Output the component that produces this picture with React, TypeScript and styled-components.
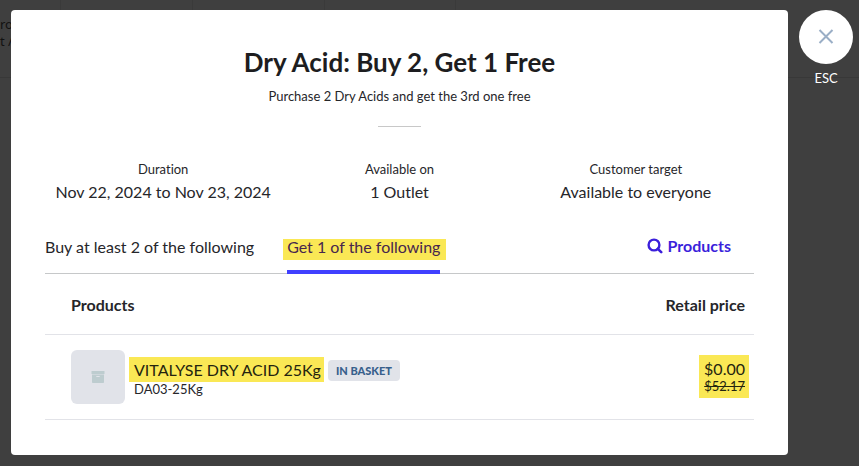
import React from "react";
import styled, { createGlobalStyle } from "styled-components";

const GlobalStyle = createGlobalStyle`
  *, *::before, *::after { box-sizing: border-box; }
  html, body { margin: 0; background: #3f3f3f; }
  body {
    font-family: Lato, "Open Sans", sans-serif;
    font-size: 16px;
    line-height: 24px;
    font-variant-ligatures: no-common-ligatures;
    color: #26262a;
  }
  h1, p, dl, dt, dd { margin: 0; }
  button { font: inherit; font-variant-ligatures: inherit; color: inherit; background: none; border: 0; padding: 0; cursor: pointer; }
`;

const Page = styled.div`
  position: relative;
  min-height: 100vh;
  overflow: hidden;
  background: #3f3f3f;
`;

const Backdrop = styled.div`
  position: absolute;
  inset: 0;
  overflow: hidden;
`;

const BackdropRow = styled.div`
  display: grid;
  grid-template-columns: 61px 132px 132px 131px 1fr;
  height: 78px;
  border-bottom: 1px solid #383838;
`;

const BackdropCell = styled.div`
  padding-top: 16px;
  border-right: 1px solid #3a3a3a;
  color: #111111;
  font-family: "Noto Sans", sans-serif;
  font-size: 13px;
  line-height: 17px;
  white-space: pre-line;

  &:last-child { border-right: 0; }
`;

const Overlay = styled.div`
  position: relative;
  display: flex;
  align-items: flex-start;
  gap: 11px;
  padding: 10px 6px 11px 11px;
`;

const Modal = styled.main`
  flex: 1;
  min-width: 0;
  padding: 36px 34px 35px;
  border-radius: 4px;
  background: #ffffff;
`;

const Header = styled.header`
  display: flex;
  flex-direction: column;
  align-items: center;
  text-align: center;
`;

const Title = styled.h1`
  font-size: 26px;
  line-height: 32px;
  font-weight: 700;
  color: #1d1d20;
`;

const Subtitle = styled.p`
  margin-top: 8px;
  font-size: 13px;
  line-height: 20px;
`;

const Divider = styled.hr`
  width: 43px;
  height: 1px;
  margin: 20px 0 32px;
  border: 0;
  background: #c8c8c8;
`;

const Facts = styled.dl`
  display: grid;
  grid-template-columns: repeat(3, 1fr);
  text-align: center;
`;

const FactLabel = styled.dt`
  font-size: 13px;
  line-height: 20px;
`;

const FactValue = styled.dd`
  margin-top: 1px;
`;

const TabBar = styled.div`
  display: flex;
  align-items: flex-end;
  justify-content: space-between;
  margin-top: 30px;
  padding-right: 23px;
  border-bottom: 1px solid #c6c8c9;
`;

const TabList = styled.div`
  display: flex;
  gap: 33px;
`;

const Tab = styled.button<{ $active?: boolean }>`
  display: block;
  margin-bottom: -1px;
  padding-bottom: 10px;
  border-bottom: 4px solid ${({ $active }) => ($active ? "#4040ff" : "transparent")};
  color: ${({ $active }) => ($active ? "#47264d" : "#26262a")};
`;

const TabMark = styled.span<{ $active?: boolean }>`
  display: block;
  height: 21px;
  margin: 0 ${({ $active }) => ($active ? "-6px 0 -4px" : "0")};
  padding: 0 ${({ $active }) => ($active ? "6px 0 4px" : "0")};
  line-height: 16px;
  background: ${({ $active }) => ($active ? "#fae855" : "transparent")};
`;

const SearchButton = styled.button`
  display: flex;
  align-items: center;
  gap: 4px;
  margin-bottom: 15px;
  font-weight: 700;
  color: #3b1fdb;
`;

const Table = styled.table`
  width: 100%;
  border-collapse: separate;
  border-spacing: 0;
`;

const HeadCell = styled.th<{ $right?: boolean }>`
  height: 61px;
  padding: ${({ $right }) => ($right ? "2px 9px 0 0" : "2px 0 0 26px")};
  border-bottom: 1px solid #e2e3e8;
  text-align: ${({ $right }) => ($right ? "right" : "left")};
  font-weight: 700;
`;

const BodyCell = styled.td<{ $right?: boolean }>`
  padding: ${({ $right }) => ($right ? "14px 5px 16px 0" : "15px 0 15px 26px")};
  border-bottom: 1px solid #e2e3e8;
  text-align: ${({ $right }) => ($right ? "right" : "left")};
`;

const Product = styled.div`
  display: flex;
  align-items: center;
  gap: 4px;
`;

const Thumb = styled.div`
  display: grid;
  place-items: center;
  width: 54px;
  height: 54px;
  border-radius: 6px;
  background: #e1e3e9;
`;

const NameLine = styled.div`
  display: flex;
  align-items: flex-end;
  gap: 4px;
`;

const Name = styled.span`
  padding: 1px 3px 0 5px;
  background: #fae855;
  color: #24240f;
`;

const Badge = styled.span`
  margin-bottom: 1px;
  padding: 0 8px;
  border-radius: 4px;
  background: #e1e3e9;
  color: #38608c;
  font-size: 11px;
  line-height: 21px;
  font-weight: 900;
`;

const Sku = styled.div`
  padding: 0 0 2px 5px;
  font-size: 13px;
  line-height: 14px;
`;

const Price = styled.div`
  display: inline-flex;
  flex-direction: column;
  align-items: flex-end;
  padding: 5px 4px 4px 5px;
  background: #fae855;
  color: #24240f;
  line-height: 18px;
  vertical-align: middle;
`;

const OldPrice = styled.del`
  font-size: 13px;
  line-height: 16px;
`;

const CloseColumn = styled.button`
  display: flex;
  flex-direction: column;
  align-items: center;
  gap: 4px;
  color: #ffffff;
  font-size: 13px;
  line-height: 20px;
`;

const CloseCircle = styled.span`
  display: grid;
  place-items: center;
  width: 54px;
  height: 54px;
  border-radius: 50%;
  background: #ffffff;
`;

const facts = [
  { label: "Duration", value: "Nov 22, 2024 to Nov 23, 2024" },
  { label: "Available on", value: "1 Outlet" },
  { label: "Customer target", value: "Available to everyone" },
];

function SearchIcon() {
  return (
    <svg width="16" height="16" viewBox="0 0 16 16" fill="none" stroke="currentColor" aria-hidden="true">
      <circle cx="7" cy="7" r="5.4" strokeWidth="2.4" />
      <path d="M10.8 10.8 14.2 14.2" strokeWidth="2.6" strokeLinecap="round" />
    </svg>
  );
}

function BoxIcon() {
  return (
    <svg width="14" height="12" viewBox="0 0 14 12" aria-hidden="true">
      <path d="M0.5 0H13.5V3H0.5Z" fill="#bdcccf" />
      <path d="M1 3.6H13V11.2Q13 12 12.2 12H1.8Q1 12 1 11.2Z" fill="#bdcccf" />
      <path d="M5.3 5.5H8.7" stroke="#e1e3e9" strokeWidth="1" />
    </svg>
  );
}

function CloseIcon() {
  return (
    <svg width="16" height="16" viewBox="0 0 16 16" stroke="#9aaec6" strokeWidth="2" aria-hidden="true">
      <path d="M1.5 1 14.5 14M14.5 1 1.5 14" />
    </svg>
  );
}

export default function App() {
  return (
    <Page>
      <GlobalStyle />
      <Backdrop aria-hidden="true">
        <BackdropRow>
          <BackdropCell>{"ro\nt /"}</BackdropCell>
          <BackdropCell />
          <BackdropCell />
          <BackdropCell />
          <BackdropCell />
        </BackdropRow>
      </Backdrop>
      <Overlay>
        <Modal>
          <Header>
            <Title>Dry Acid: Buy 2, Get 1 Free</Title>
            <Subtitle>Purchase 2 Dry Acids and get the 3rd one free</Subtitle>
            <Divider />
          </Header>
          <Facts>
            {facts.map((fact) => (
              <div key={fact.label}>
                <FactLabel>{fact.label}</FactLabel>
                <FactValue>{fact.value}</FactValue>
              </div>
            ))}
          </Facts>
          <TabBar>
            <TabList role="tablist">
              <Tab role="tab" aria-selected={false}>
                <TabMark>Buy at least 2 of the following</TabMark>
              </Tab>
              <Tab role="tab" aria-selected $active>
                <TabMark $active>Get 1 of the following</TabMark>
              </Tab>
            </TabList>
            <SearchButton>
              <SearchIcon />
              Products
            </SearchButton>
          </TabBar>
          <Table>
            <thead>
              <tr>
                <HeadCell scope="col">Products</HeadCell>
                <HeadCell scope="col" $right>Retail price</HeadCell>
              </tr>
            </thead>
            <tbody>
              <tr>
                <BodyCell>
                  <Product>
                    <Thumb>
                      <BoxIcon />
                    </Thumb>
                    <div>
                      <NameLine>
                        <Name>VITALYSE DRY ACID 25Kg</Name>
                        <Badge>IN BASKET</Badge>
                      </NameLine>
                      <Sku>DA03-25Kg</Sku>
                    </div>
                  </Product>
                </BodyCell>
                <BodyCell $right>
                  <Price>
                    <span>$0.00</span>
                    <OldPrice>$52.17</OldPrice>
                  </Price>
                </BodyCell>
              </tr>
            </tbody>
          </Table>
        </Modal>
        <CloseColumn aria-label="Close, ESC">
          <CloseCircle>
            <CloseIcon />
          </CloseCircle>
          ESC
        </CloseColumn>
      </Overlay>
    </Page>
  );
}
